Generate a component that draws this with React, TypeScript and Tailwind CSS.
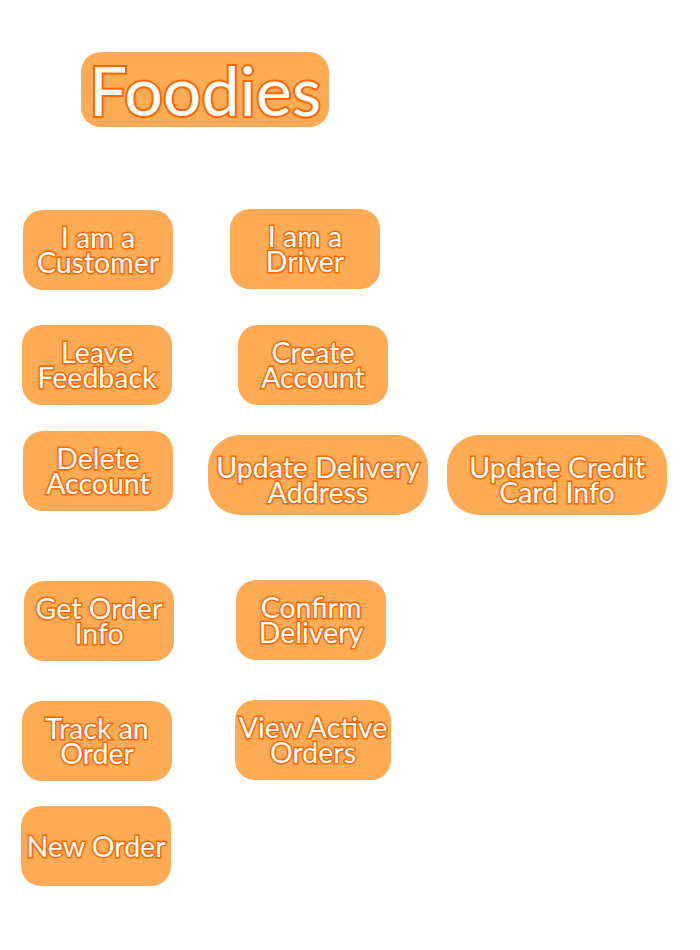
import React from "react";

type Btn = { label: string[]; x: number; y: number; w: number; r?: string };

const buttons: Btn[] = [
  { label: ["I am a", "Customer"], x: 23, y: 210, w: 150 },
  { label: ["I am a", "Driver"], x: 230, y: 209, w: 150 },
  { label: ["Leave", "Feedback"], x: 22, y: 325, w: 150 },
  { label: ["Create", "Account"], x: 238, y: 325, w: 150 },
  { label: ["Delete", "Account"], x: 23, y: 431, w: 150 },
  { label: ["Update Delivery", "Address"], x: 208, y: 435, w: 220, r: "big" },
  { label: ["Update Credit", "Card Info"], x: 447, y: 435, w: 220, r: "big" },
  { label: ["Get Order", "Info"], x: 24, y: 581, w: 150 },
  { label: ["Confirm", "Delivery"], x: 236, y: 580, w: 150 },
  { label: ["Track an", "Order"], x: 22, y: 701, w: 150 },
  { label: ["View Active", "Orders"], x: 235, y: 700, w: 156 },
  { label: ["New Order"], x: 21, y: 806, w: 150 },
];

const textCls =
  "text-white [paint-order:stroke_fill] font-['Lato',sans-serif]";

export default function App() {
  return (
    <div className="relative w-[700px] h-[950px] bg-white overflow-hidden">
      <div
        className={`absolute left-[81px] top-[52px] w-[248px] h-[75px] rounded-[20px] bg-[#ffab55] flex items-center justify-center text-[68px] leading-none ${textCls} [-webkit-text-stroke:4px_#ff6600]`}
      >
        Foodies
      </div>
      {buttons.map((b, i) => (
        <button
          key={i}
          className={`absolute h-[80px] ${b.r === "big" ? "rounded-[32px] pt-[10px]" : "rounded-[20px]"} bg-[#ffab55] flex flex-col items-center justify-center text-[28.5px] leading-[25px] ${textCls} [-webkit-text-stroke:3px_#ff6600]`}
          style={{ left: b.x, top: b.y, width: b.w }}
        >
          {b.label.map((l, j) => (
            <span key={j} className="whitespace-nowrap">
              {l}
            </span>
          ))}
        </button>
      ))}
    </div>
  );
}
